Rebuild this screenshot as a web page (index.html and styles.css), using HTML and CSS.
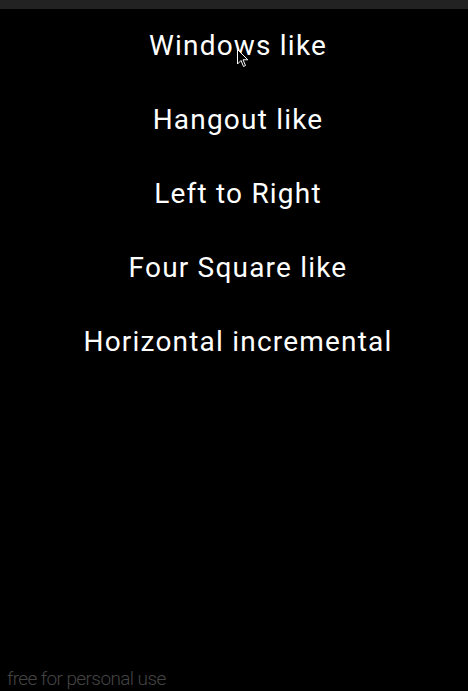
FILE: index.html
```html
<!DOCTYPE html>
<html>
<head>
<meta charset="utf-8">
<link rel="stylesheet" href="styles.css">
</head>
<body>
<div class="screen">
  <div class="topbar"></div>
  <ul class="menu">
    <li class="item">Windows like</li>
    <li class="item">Hangout like</li>
    <li class="item">Left to Right</li>
    <li class="item">Four Square like</li>
    <li class="item">Horizontal incremental</li>
  </ul>
  <div class="footer">free for personal use</div>
  <svg class="cursor" width="12" height="19" viewBox="0 0 12 19">
    <path d="M0.5 0.5 L0.5 15 L4 11.5 L6.5 17.5 L8.5 16.5 L6 10.8 L10.8 10.8 Z" fill="#000" stroke="#fff" stroke-width="1"/>
  </svg>
</div>
</body>
</html>
```
FILE: styles.css
```css
html, body {
  margin: 0;
  padding: 0;
  background: #000;
}
.screen {
  position: relative;
  width: 468px;
  height: 691px;
  background: #000;
  display: flex;
  flex-direction: column;
  font-family: Roboto, "Noto Sans", sans-serif;
  overflow: hidden;
}
.topbar {
  height: 9px;
  background: #222222;
  flex: none;
}
.menu {
  list-style: none;
  margin: 0;
  padding: 0 0 0 8px;
  flex: 1;
}
.item {
  color: #fff;
  font-size: 28px;
  letter-spacing: 1.2px;
  text-align: center;
  height: 74px;
  line-height: 74px;
}
.footer {
  color: #444444;
  font-size: 19px;
  letter-spacing: -0.6px;
  font-weight: 300;
  padding: 0 0 0 7px;
  height: 24px;
  line-height: 24px;
}
.cursor {
  position: absolute;
  left: 237px;
  top: 49px;
}
```
